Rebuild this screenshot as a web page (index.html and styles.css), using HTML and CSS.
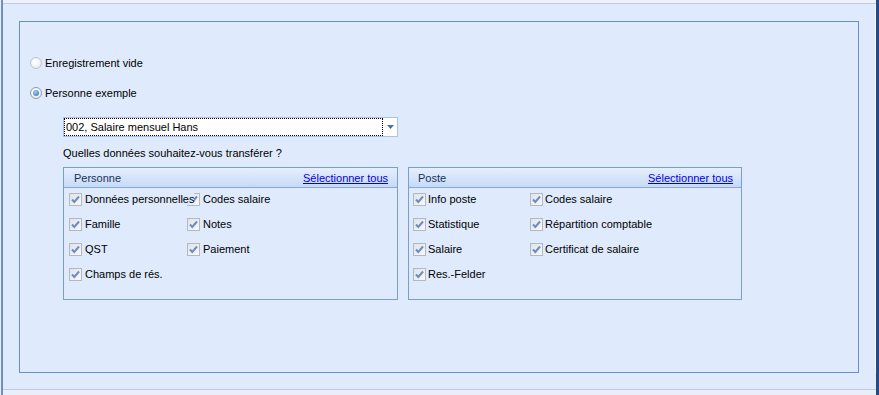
FILE: index.html
```html
<!DOCTYPE html>
<html lang="fr">

<head>
  <meta charset="UTF-8" />
  <title>Transfert de données</title>
  <link rel="stylesheet" href="styles.css">
</head>

<body>
  <div class="window">
    <div class="topbar"></div>

    <div class="content">
      <div class="frame">

        <!-- Choix du modèle -->
        <label class="radio-row">
          <span class="radio"></span>
          Enregistrement vide
        </label>
        <label class="radio-row second">
          <span class="radio checked"><span class="dot"></span></span>
          Personne exemple
        </label>

        <div class="combo">
          <div class="combo-text">002, Salaire mensuel Hans</div>
          <div class="combo-arrow">
            <svg width="7" height="4" viewBox="0 0 7 4"><path d="M0 0h7L3.5 4z" fill="#4d6ea8" /></svg>
          </div>
        </div>

        <div class="question">Quelles données souhaitez-vous transférer ?</div>

        <div class="groups">
          <div class="group">
            <div class="group-head">
              <span>Personne</span>
              <a href="#">Sélectionner tous</a>
            </div>
            <div class="group-body personne">
              <label class="check over"><span class="cb"><svg width="9" height="9" viewBox="0 0 9 9"><path d="M1 4.5l2.3 2.5L8 1.5" /></svg></span><span class="lbl">Données personnelles</span></label>
              <label class="check"><span class="cb"><svg width="9" height="9" viewBox="0 0 9 9"><path d="M1 4.5l2.3 2.5L8 1.5" /></svg></span>Codes salaire</label>
              <label class="check"><span class="cb"><svg width="9" height="9" viewBox="0 0 9 9"><path d="M1 4.5l2.3 2.5L8 1.5" /></svg></span>Famille</label>
              <label class="check"><span class="cb"><svg width="9" height="9" viewBox="0 0 9 9"><path d="M1 4.5l2.3 2.5L8 1.5" /></svg></span>Notes</label>
              <label class="check"><span class="cb"><svg width="9" height="9" viewBox="0 0 9 9"><path d="M1 4.5l2.3 2.5L8 1.5" /></svg></span>QST</label>
              <label class="check"><span class="cb"><svg width="9" height="9" viewBox="0 0 9 9"><path d="M1 4.5l2.3 2.5L8 1.5" /></svg></span>Paiement</label>
              <label class="check"><span class="cb"><svg width="9" height="9" viewBox="0 0 9 9"><path d="M1 4.5l2.3 2.5L8 1.5" /></svg></span>Champs de rés.</label>
            </div>
          </div>

          <div class="group">
            <div class="group-head poste-head">
              <span>Poste</span>
              <a href="#">Sélectionner tous</a>
            </div>
            <div class="group-body poste">
              <label class="check"><span class="cb"><svg width="9" height="9" viewBox="0 0 9 9"><path d="M1 4.5l2.3 2.5L8 1.5" /></svg></span>Info poste</label>
              <label class="check"><span class="cb"><svg width="9" height="9" viewBox="0 0 9 9"><path d="M1 4.5l2.3 2.5L8 1.5" /></svg></span>Codes salaire</label>
              <label class="check"><span class="cb"><svg width="9" height="9" viewBox="0 0 9 9"><path d="M1 4.5l2.3 2.5L8 1.5" /></svg></span>Statistique</label>
              <label class="check"><span class="cb"><svg width="9" height="9" viewBox="0 0 9 9"><path d="M1 4.5l2.3 2.5L8 1.5" /></svg></span>Répartition comptable</label>
              <label class="check"><span class="cb"><svg width="9" height="9" viewBox="0 0 9 9"><path d="M1 4.5l2.3 2.5L8 1.5" /></svg></span>Salaire</label>
              <label class="check"><span class="cb"><svg width="9" height="9" viewBox="0 0 9 9"><path d="M1 4.5l2.3 2.5L8 1.5" /></svg></span>Certificat de salaire</label>
              <label class="check"><span class="cb"><svg width="9" height="9" viewBox="0 0 9 9"><path d="M1 4.5l2.3 2.5L8 1.5" /></svg></span>Res.-Felder</label>
            </div>
          </div>
        </div>

      </div>
    </div>

    <div class="bottombar"></div>
  </div>
</body>

</html>
```

FILE: styles.css
```css
body {
  margin: 0;
  font-family: 'Liberation Sans', Arial, sans-serif;
  font-size: 11px;
  color: #000;
  background: #dfebfc;
  overflow: hidden;
}

.window {
  height: 395px;
  box-sizing: border-box;
  border-left: 1px solid #eaf1fc;
  border-right: 3px solid #264a86;
  display: flex;
  flex-direction: column;
  background: #dfebfc;
  box-shadow: inset 2px 0 0 #6c8fc9;
}

.topbar {
  flex: none;
  height: 3px;
  background: #eef3fb;
  border-bottom: 1px solid #c3cbd9;
  margin-left: 2px;
}

.content {
  flex: none;
  padding: 17px 16px 0 18px;
  border-right: 1px solid #f4f8fe;
}

.frame {
  box-sizing: border-box;
  height: 352px;
  border: 1px solid #6b8fcc;
  padding: 33px 10px 0 10px;
}

/* Boutons radio */
.radio-row {
  display: flex;
  align-items: center;
  gap: 3px;
  height: 16px;
}

.radio-row.second {
  margin-top: 14px;
}

.radio {
  width: 10px;
  height: 10px;
  border-radius: 50%;
  border: 1px solid #bcc2cc;
  background: radial-gradient(circle at 40% 35%, #ffffff, #e3e7ee);
  display: flex;
  align-items: center;
  justify-content: center;
}

.radio.checked {
  border-color: #8e9aad;
}

.radio .dot {
  width: 6px;
  height: 6px;
  border-radius: 50%;
  background: radial-gradient(circle at 40% 35%, #9fd0f4, #2f6ba8);
}

/* Liste déroulante */
.combo {
  margin: 16px 0 0 33px;
  width: 335px;
  height: 20px;
  box-sizing: border-box;
  border: 1px solid #a8c1e6;
  background: #fff;
  display: flex;
  align-items: stretch;
}

.combo-text {
  flex: 1;
  border: 1px dotted #000;
  padding-left: 1px;
  line-height: 16px;
}

.combo-arrow {
  width: 14px;
  display: flex;
  align-items: center;
  justify-content: center;
}

.question {
  margin: 8px 0 0 33px;
  height: 16px;
  line-height: 16px;
}

/* Groupes */
.groups {
  display: flex;
  gap: 10px;
  margin: 6px 0 0 33px;
}

.group {
  width: 335px;
  height: 133px;
  box-sizing: border-box;
  border: 1px solid #7b9dd3;
}

.group + .group {
  width: 334px;
}

.group-head {
  height: 19px;
  display: flex;
  align-items: center;
  justify-content: space-between;
  padding: 0 9px 0 10px;
  color: #15325e;
  background: linear-gradient(to bottom, #e6effc, #c6daf6);
  border-bottom: 1px solid #88a8da;
}

.poste-head {
  padding: 0 8px 0 9px;
}

.group-head a {
  color: #0000ee;
  text-decoration: underline;
}

.group-body {
  display: grid;
  grid-template-columns: 118px auto;
  row-gap: 9px;
  padding: 3px 0 0 5px;
}

.group-body.poste {
  grid-template-columns: 117px auto;
  padding-left: 4px;
}

.check {
  display: flex;
  align-items: center;
  gap: 3px;
  height: 16px;
  white-space: nowrap;
}

.poste .check {
  gap: 2px;
}

.check.over .lbl {
  position: relative;
  z-index: 1;
  background: #dfebfc;
}

.cb {
  width: 11px;
  height: 11px;
  flex: none;
  border: 1px solid #b3b9c3;
  background: linear-gradient(135deg, #dfe3ea, #f7f8fa);
  display: flex;
  align-items: center;
  justify-content: center;
}

.cb svg path {
  fill: none;
  stroke: #6f8cbf;
  stroke-width: 2;
}

.bottombar {
  margin-top: auto;
  flex: none;
  height: 5px;
  border-top: 1px solid #c3cbd9;
  background: #e9eff9;
  margin-left: 2px;
}
```
